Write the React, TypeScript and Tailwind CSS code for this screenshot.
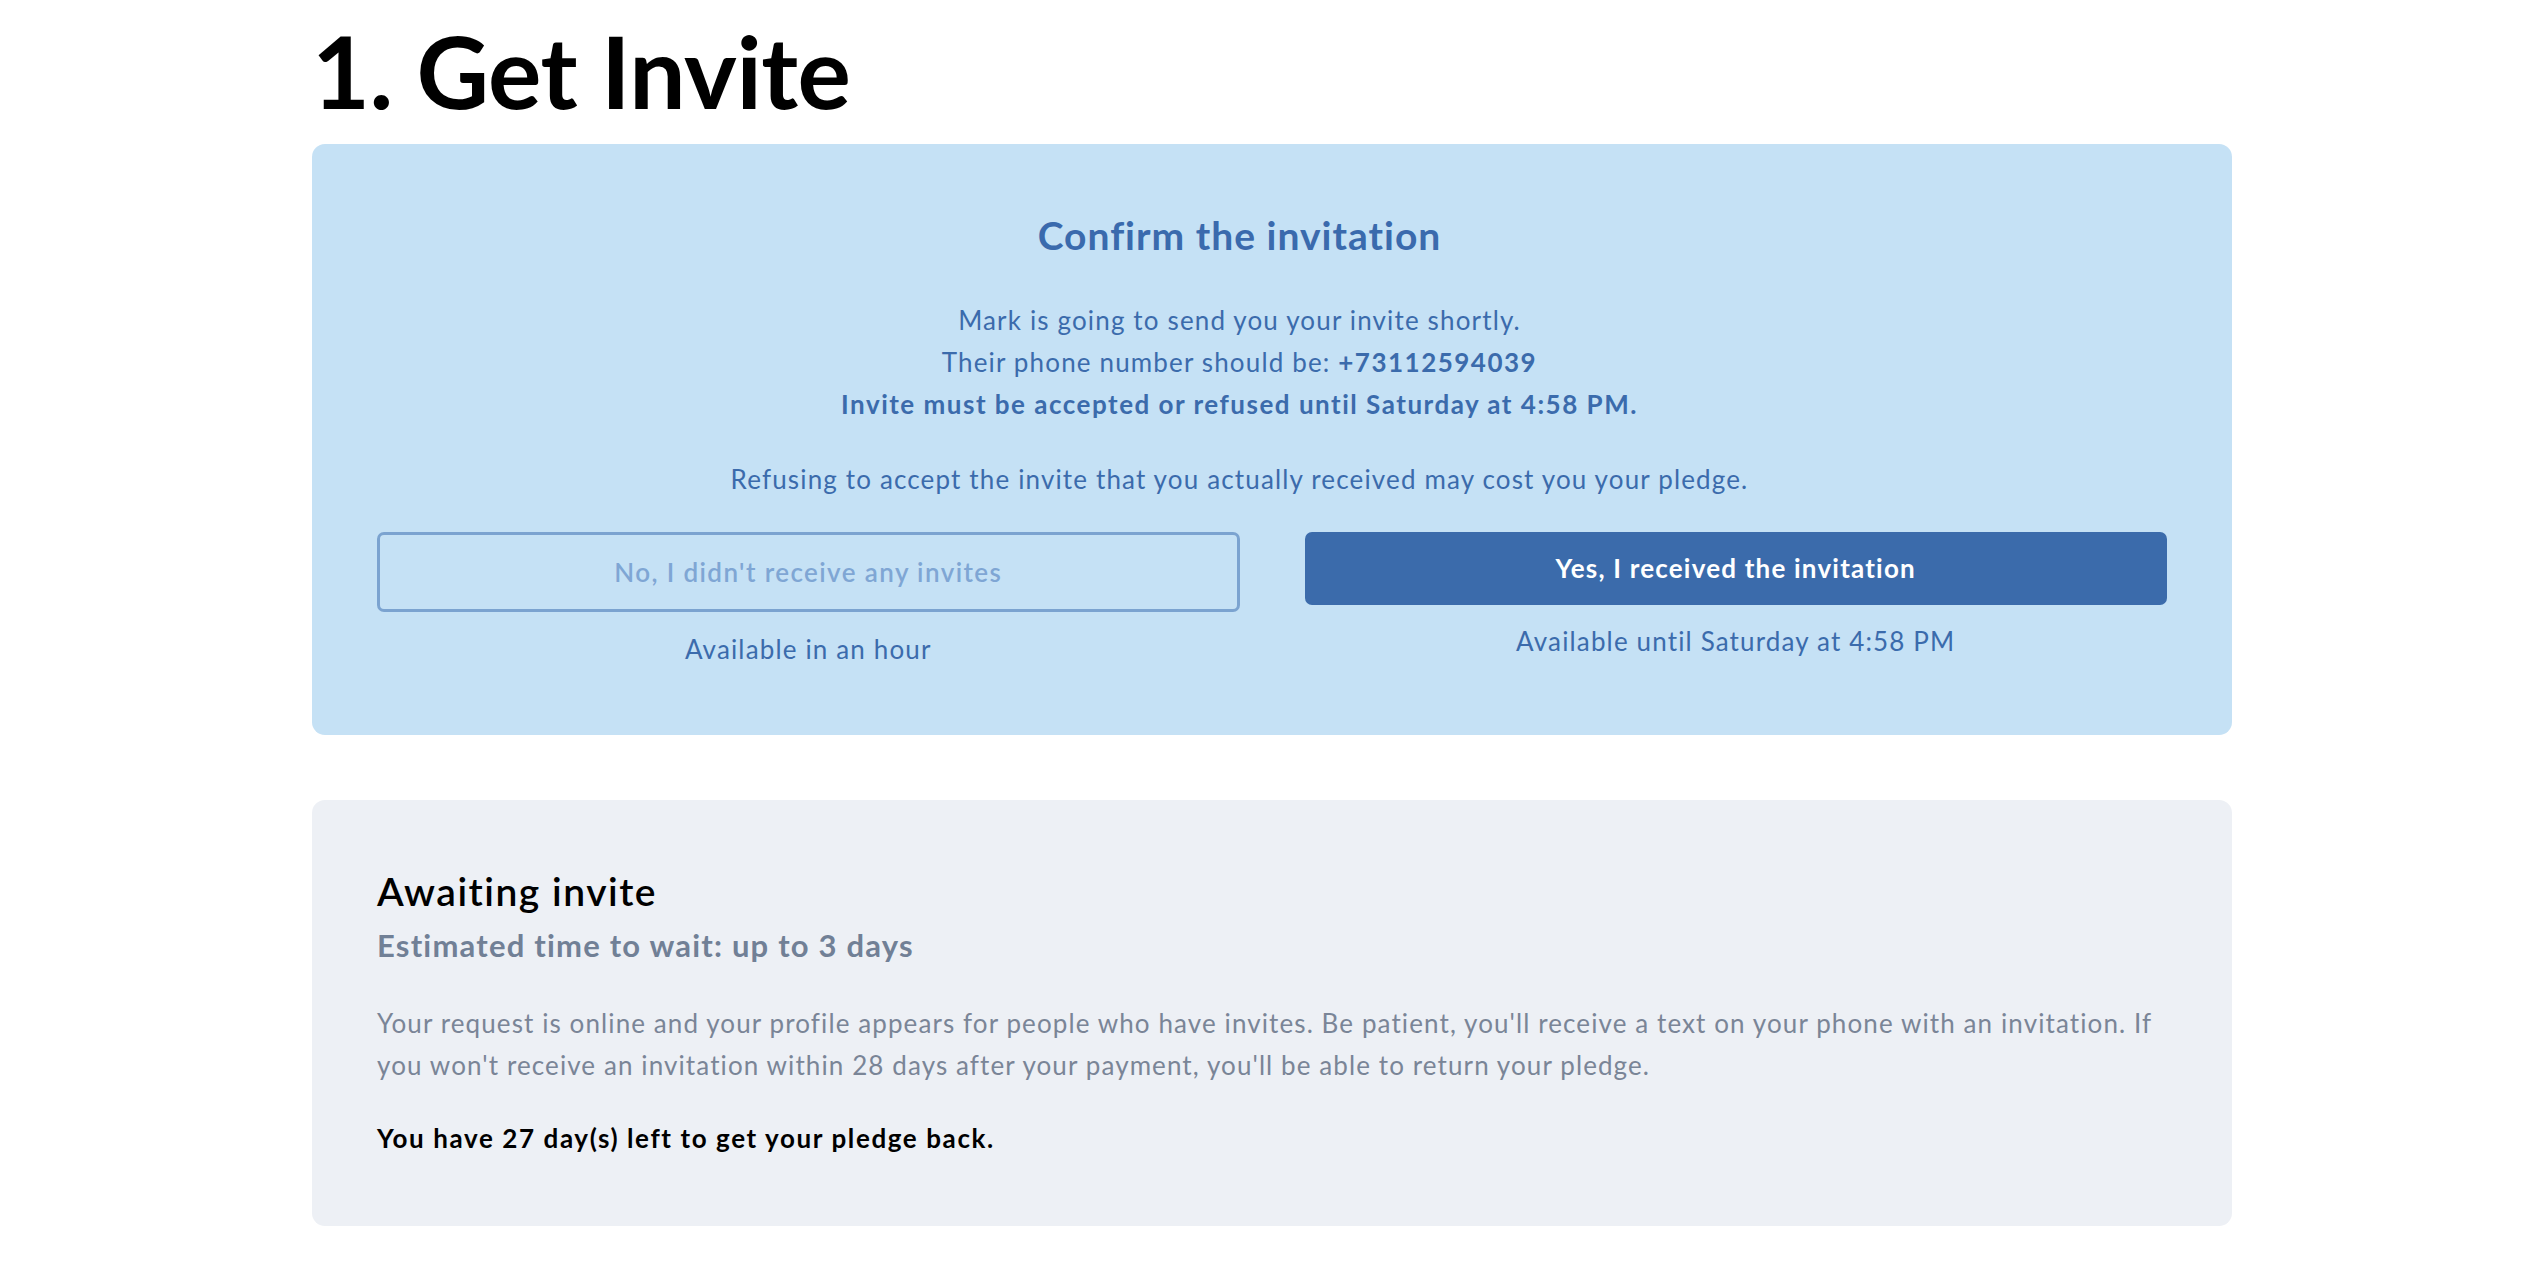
export default function App() {
  return (
    <div className="min-h-screen bg-white font-['Lato','Noto_Sans',sans-serif] text-black">
      <div className="mx-auto w-[1920px]">
        {/* Page title */}
        <h1 className="mt-[20px] text-[100px] font-bold leading-none tracking-[-0.5px]">1. Get Invite</h1>

        {/* Confirm card */}
        <div className="mt-[24px] rounded-[13px] bg-[#c5e1f5] px-[65px] pt-[68px] pb-[65px] text-center text-[#3b6bac] tracking-[1.15px]">
          <div className="pr-[65px]">
            <h2 className="text-[39px] font-bold leading-[47px] tracking-[1px] text-[#3a6aad]">Confirm the invitation</h2>
            <div className="mt-[40px] text-[26px] leading-[42px]">
              <p>Mark is going to send you your invite shortly.</p>
              <p>
                Their phone number should be: <span className="font-bold tracking-[1.5px]">+73112594039</span>
              </p>
              <p className="font-bold tracking-[1.5px]">Invite must be accepted or refused until Saturday at 4:58 PM.</p>
            </div>
            <p className="mt-[33px] text-[26px] leading-[42px]">
              Refusing to accept the invite that you actually received may cost you your pledge.
            </p>
          </div>

          <div className="mt-[32px] grid grid-cols-2 gap-[65px]">
            <div className="flex flex-col">
              <button className="h-[80px] rounded-[7px] border-[3px] border-[#7ba3d0] text-[26px] font-semibold tracking-[1.4px] text-[#7fa6d4]">
                No, I didn't receive any invites
              </button>
              <p className="mt-[16px] text-[26px] leading-[42px]">Available in an hour</p>
            </div>
            <div className="flex flex-col">
              <button className="h-[73px] rounded-[7px] bg-[#3b6bab] text-[26px] font-bold tracking-[1.2px] text-white">
                Yes, I received the invitation
              </button>
              <p className="mt-[15px] text-[26px] leading-[42px]">Available until Saturday at 4:58 PM</p>
            </div>
          </div>
        </div>

        {/* Status card */}
        <div className="mt-[65px] rounded-[13px] bg-[#edf0f5] px-[65px] pt-[68px] pb-[67px]">
          <h3 className="text-[39px] font-semibold leading-[47px] tracking-[1.5px] text-black">Awaiting invite</h3>
          <p className="mt-[12px] text-[31px] font-bold leading-[37px] tracking-[1.2px] text-[#718096]">
            Estimated time to wait: up to 3 days
          </p>
          <p className="mt-[38px] text-[26px] leading-[42px] tracking-[1.1px] text-[#7a8597]">
            Your request is online and your profile appears for people who have invites. Be patient, you'll receive a
            text on your phone with an invitation. If you won't receive an invitation within 28 days after your payment,
            you'll be able to return your pledge.
          </p>
          <p className="mt-[31px] text-[26px] font-bold leading-[42px] tracking-[1.6px] text-black">
            You have 27 day(s) left to get your pledge back.
          </p>
        </div>
      </div>
    </div>
  )
}
